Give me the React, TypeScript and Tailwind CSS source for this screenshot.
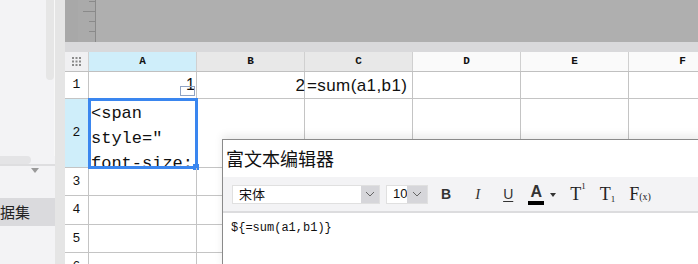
import React from "react";

const mono = { fontFamily: '"Liberation Mono", "DejaVu Sans Mono", monospace' };
const sans = { fontFamily: '"Liberation Sans", "Noto Sans CJK SC", sans-serif' };
const serif = { fontFamily: '"Liberation Serif", "Noto Serif", serif' };
const cjk = { fontFamily: '"Noto Sans CJK SC", "Liberation Sans", sans-serif' };

function Chevron() {
  return (
    <svg width="10" height="6" viewBox="0 0 10 6">
      <path d="M1 1 L5 5 L9 1" fill="none" stroke="#666" strokeWidth="1" />
    </svg>
  );
}

function LeftPanel() {
  return (
    <div className="w-[55px] h-full flex flex-col bg-[#f3f3f5]">
      <div className="h-[156px] flex">
        <div className="w-[46px] bg-[#f3f3f5]" />
        <div className="w-[8px] h-[80px] bg-[#e6e6e6] rounded-b-[4px]" />
        <div className="w-[1px] bg-[#f8f8f8]" />
      </div>
      <div className="h-[8px] flex">
        <div className="w-[31px] bg-[#e4e4e6] rounded-r-[4px]" />
      </div>
      <div className="h-[2px] bg-[#dedee0]" />
      <div className="h-[32px] relative">
        <div className="absolute left-[31px] top-[2px] w-0 h-0 border-l-[4px] border-r-[4px] border-t-[5px] border-l-transparent border-r-transparent border-t-[#9a9a9a]" />
      </div>
      <div className="h-[28px] bg-[#dadadd] flex items-center text-[15px] text-[#222] whitespace-nowrap overflow-hidden" style={cjk}>
        <span>据集</span>
      </div>
      <div className="flex-1" />
    </div>
  );
}

function TopArea() {
  return (
    <div className="h-[42px] flex bg-[#afafaf]">
      <div className="w-[13px] bg-[#a8a8a8]" />
      <div className="w-[17px] bg-[#aaaaaa]">
        <svg width="17" height="42" viewBox="0 0 17 42">
          <line x1="11" y1="1.5" x2="17" y2="1.5" stroke="#8a8a8a" strokeWidth="1" />
          <line x1="5" y1="11.5" x2="17" y2="11.5" stroke="#8a8a8a" strokeWidth="1" />
          <line x1="11" y1="21.5" x2="17" y2="21.5" stroke="#8a8a8a" strokeWidth="1" />
          <line x1="11" y1="31.5" x2="17" y2="31.5" stroke="#8a8a8a" strokeWidth="1" />
        </svg>
      </div>
      <div className="w-[1px] bg-[#8a8a8a]" />
      <div className="flex-1" />
    </div>
  );
}

const colW = "w-[108px] shrink-0";

function HeaderRow() {
  const cols = [
    { l: "A", bg: "bg-[#cfeefa]" },
    { l: "B", bg: "bg-[#e8e8e8]" },
    { l: "C", bg: "bg-[#e8e8e8]" },
    { l: "D", bg: "bg-[#fafafa]" },
    { l: "E", bg: "bg-[#fafafa]" },
    { l: "F", bg: "bg-[#fafafa]" },
  ];
  return (
    <div className="h-[20px] flex border-b border-[#c0c0c0]">
      <div className="w-[24px] shrink-0 bg-[#f0f0f2] border-r border-[#d0d0d0] flex items-center justify-center">
        <svg width="9" height="9" viewBox="0 0 9 9">
          {[0, 3.5, 7].map((x) =>
            [0, 3.5, 7].map((y) => <rect key={`${x}-${y}`} x={x} y={y} width="2" height="2" fill="#8a8a8a" />)
          )}
        </svg>
      </div>
      {cols.map((c) => (
        <div
          key={c.l}
          className={`${colW} ${c.bg} border-r border-[#d0d0d0] flex items-center justify-center text-[11px] font-bold text-[#111]`}
          style={mono}
        >
          {c.l}
        </div>
      ))}
    </div>
  );
}

function RowHead({ n, active }: { n: number; active?: boolean }) {
  return (
    <div
      className={`w-[24px] shrink-0 border-r border-[#c4c4c4] flex items-center justify-center text-[13px] text-[#111] ${
        active ? "bg-[#cfeefa]" : "bg-white"
      }`}
      style={mono}
    >
      {n}
    </div>
  );
}

function Cell({ children, className = "" }: { children?: React.ReactNode; className?: string }) {
  return <div className={`${colW} border-r border-[#c4c4c4] relative ${className}`}>{children}</div>;
}

function Grid() {
  return (
    <div className="flex flex-col">
      <HeaderRow />
      {/* row 1 */}
      <div className="h-[27px] flex border-b border-[#c4c4c4]">
        <RowHead n={1} />
        <Cell className="flex items-center justify-end pr-[1px]">
          <span className="text-[16px] text-[#111] leading-none" style={sans}>1</span>
          <div className="absolute right-[1px] top-[14px] w-[15px] h-[10px] border border-[#8fa3c4]" />
        </Cell>
        <Cell className="flex items-center justify-end">
          <span className="text-[17px] text-[#111] leading-none -mr-[1px]" style={sans}>2</span>
        </Cell>
        <Cell className="flex items-center pl-[2px]">
          <span className="text-[17px] text-[#111] leading-none whitespace-nowrap tracking-[0.4px]" style={sans}>=sum(a1,b1)</span>
        </Cell>
        <Cell />
        <Cell />
        <Cell />
      </div>
      {/* row 2 */}
      <div className="h-[69px] flex border-b border-[#c4c4c4]">
        <RowHead n={2} active />
        <Cell className="overflow-visible">
          <div className="h-full overflow-hidden pl-[2px] pt-[2px] text-[17px] leading-[25px] text-[#111]" style={mono}>
            <div>&lt;span</div>
            <div>style="</div>
            <div>font-size:</div>
          </div>
          <div className="absolute -left-[1px] -top-[1px] w-[110px] h-[71px] border-[3px] border-[#3a86ef]" />
          <div className="absolute -right-[3px] -bottom-[3px] w-[6px] h-[6px] bg-[#3a86ef]" />
        </Cell>
        <Cell />
        <Cell />
        <Cell />
        <Cell />
        <Cell />
      </div>
      {[3, 4, 5, 6].map((n) => (
        <div key={n} className={`${n === 4 ? "h-[29px]" : "h-[28px]"} flex border-b border-[#c4c4c4]`}>
          <RowHead n={n} />
          <Cell />
          <Cell />
          <Cell />
          <Cell />
          <Cell />
          <Cell />
        </div>
      ))}
    </div>
  );
}

function Dialog() {
  return (
    <div className="absolute left-[222px] top-[139px] w-[480px] h-[130px] bg-white border-l border-t border-[#8a8a8a] shadow-[0_-4px_8px_rgba(0,0,0,0.08)] flex flex-col">
      <div className="h-[37px] shrink-0 pl-[3px] pt-[7px] text-[18px] leading-[22px] text-[#111]" style={cjk}>
        富文本编辑器
      </div>
      <div className="h-[36px] shrink-0 bg-[#f3f3f5] border-b-2 border-[#dcdcde] flex items-center pl-[9px] text-[#333]">
        <div className="w-[148px] h-[19px] bg-white border border-[#e0e0e0] flex">
          <div className="flex-1 flex items-center pl-[6px] text-[13px] text-[#111]" style={cjk}>宋体</div>
          <div className="w-[18px] bg-[#d6d6da] flex items-center justify-center"><Chevron /></div>
        </div>
        <div className="ml-[6px] w-[42px] h-[19px] bg-white border border-[#e0e0e0] flex">
          <div className="flex-1 flex items-center pl-[6px] text-[13px] text-[#111]" style={sans}>10</div>
          <div className="w-[20px] bg-[#d6d6da] flex items-center justify-center"><Chevron /></div>
        </div>
        <span className="ml-[13px] text-[14px] font-bold leading-none" style={sans}>B</span>
        <span className="ml-[24px] text-[15px] italic leading-none" style={serif}>I</span>
        <span className="ml-[23px] text-[14px] leading-none underline underline-offset-2" style={sans}>U</span>
        <div className="ml-[15px] flex flex-col items-center">
          <span className="text-[16px] font-bold leading-none" style={sans}>A</span>
          <div className="w-[16px] h-[4px] bg-black mt-[1px]" />
        </div>
        <div className="ml-[6px] mt-[1px] w-0 h-0 border-l-[3px] border-r-[3px] border-t-[4px] border-l-transparent border-r-transparent border-t-[#333]" />
        <span className="ml-[14px] text-[18px] leading-none text-[#222]" style={serif}>
          T<sup className="text-[9px] align-top relative top-[1px]">1</sup>
        </span>
        <span className="ml-[14px] text-[18px] leading-none text-[#222]" style={serif}>
          T<sub className="text-[9px] align-baseline">1</sub>
        </span>
        <span className="ml-[14px] text-[18px] leading-none text-[#222]" style={serif}>
          F<span className="text-[10px]">(x)</span>
        </span>
      </div>
      <div className="pl-[8px] pt-[7px] text-[12px] leading-[16px] text-[#111]" style={mono}>
        {"${=sum(a1,b1)}"}
      </div>
    </div>
  );
}

export default function App() {
  return (
    <div className="relative w-[698px] h-[264px] overflow-hidden flex bg-white">
      <LeftPanel />
      <div className="w-[10px] shrink-0 bg-[#e5e5e5]" />
      <div className="flex-1 flex flex-col overflow-hidden">
        <TopArea />
        <div className="h-[10px] shrink-0 bg-[#d9d9db]" />
        <Grid />
      </div>
      <Dialog />
    </div>
  );
}
